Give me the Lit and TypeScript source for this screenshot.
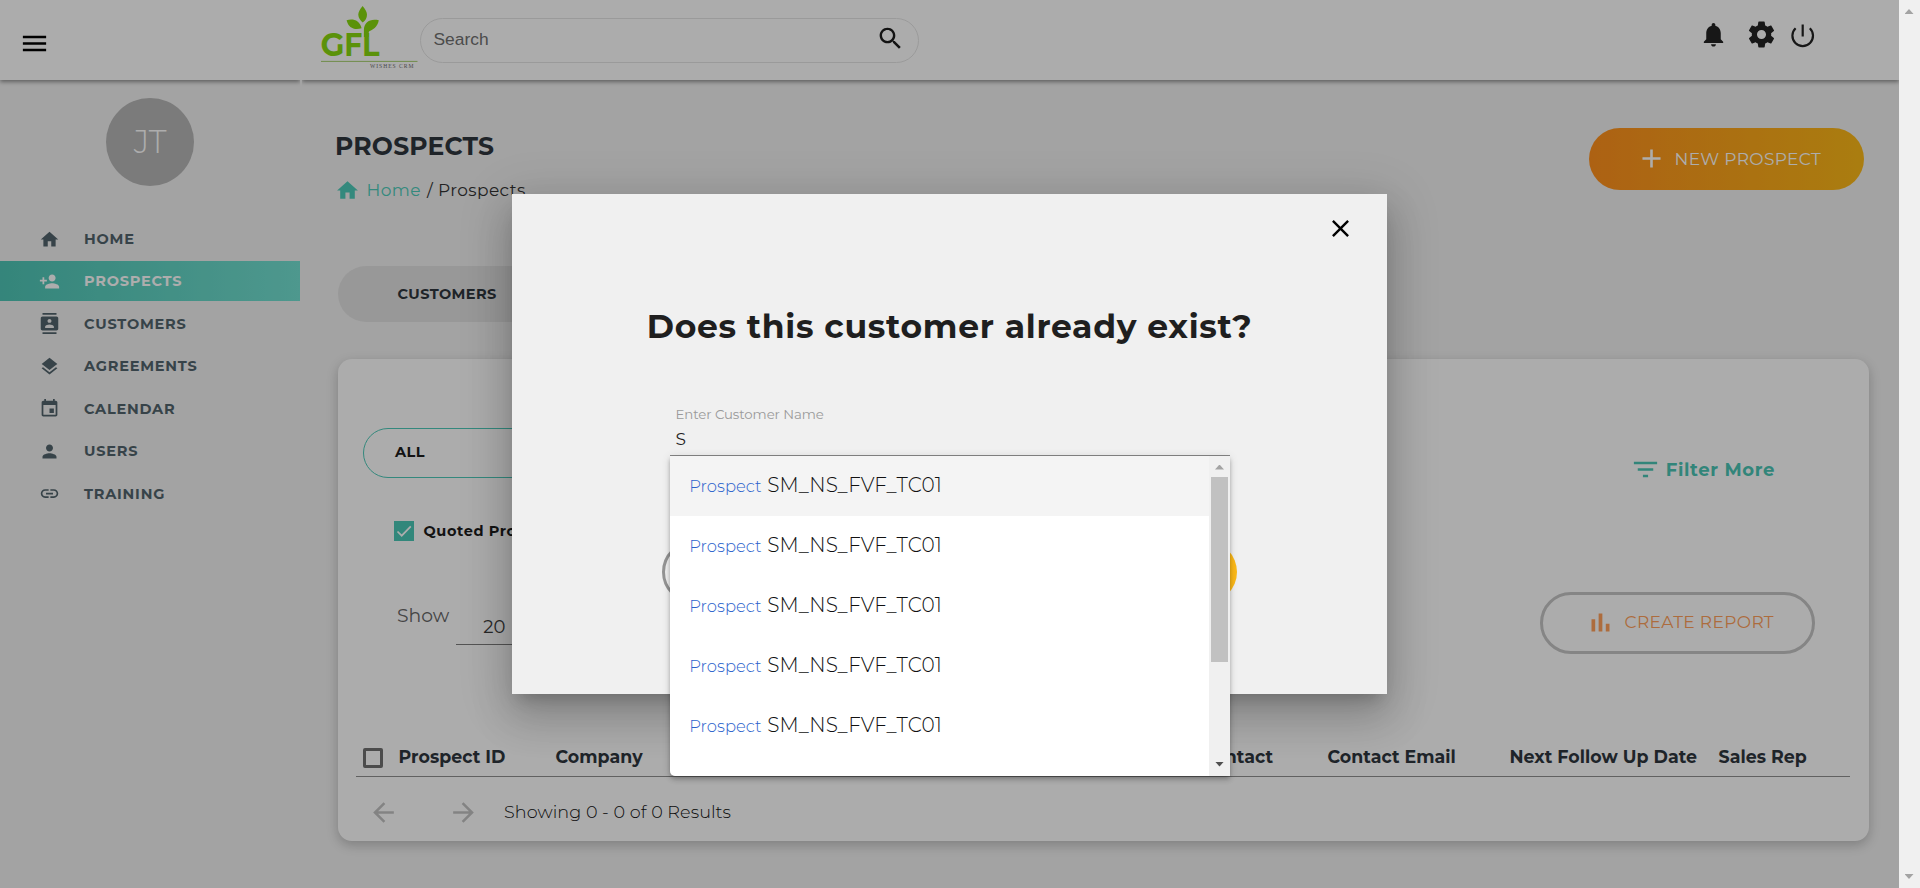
import { LitElement, html, css, svg } from 'lit';
import { customElement, property } from 'lit/decorators.js';
import { classMap } from 'lit/directives/class-map.js';

const ICONS: Record<string, string> = {
  menu: 'M3 18h18v-2H3v2zm0-5h18v-2H3v2zm0-7v2h18V6H3z',
  search:
    'M15.5 14h-.79l-.28-.27C15.41 12.59 16 11.11 16 9.5 16 5.91 13.09 3 9.5 3S3 5.91 3 9.5 5.91 16 9.5 16c1.61 0 3.09-.59 4.23-1.57l.27.28v.79l5 4.99L20.49 19l-4.99-5zm-6 0C7.01 14 5 11.99 5 9.5S7.01 5 9.5 5 14 7.01 14 9.5 11.99 14 9.5 14z',
  bell: 'M12 22c1.1 0 2-.9 2-2h-4c0 1.1.89 2 2 2zm6-6v-5c0-3.07-1.64-5.64-4.5-6.32V4c0-.83-.67-1.5-1.5-1.5s-1.5.67-1.5 1.5v.68C7.63 5.36 6 7.92 6 11v5l-2 2v1h16v-1l-2-2z',
  gear: 'M19.43 12.98c.04-.32.07-.64.07-.98s-.03-.66-.07-.98l2.11-1.65c.19-.15.24-.42.12-.64l-2-3.46c-.12-.22-.39-.3-.61-.22l-2.49 1c-.52-.4-1.08-.73-1.69-.98l-.38-2.65C14.46 2.18 14.25 2 14 2h-4c-.25 0-.46.18-.49.42l-.38 2.65c-.61.25-1.17.59-1.69.98l-2.49-1c-.23-.09-.49 0-.61.22l-2 3.46c-.13.22-.07.49.12.64l2.11 1.65c-.04.32-.07.65-.07.98s.03.66.07.98l-2.11 1.65c-.19.15-.24.42-.12.64l2 3.46c.12.22.39.3.61.22l2.49-1c.52.4 1.08.73 1.69.98l.38 2.65c.03.24.24.42.49.42h4c.25 0 .46-.18.49-.42l.38-2.65c.61-.25 1.17-.59 1.69-.98l2.49 1c.23.09.49 0 .61-.22l2-3.46c.12-.22.07-.49-.12-.64l-2.11-1.65zM12 15.5c-1.93 0-3.5-1.57-3.5-3.5s1.57-3.5 3.5-3.5 3.5 1.57 3.5 3.5-1.57 3.5-3.5 3.5z',
  home: 'M10 20v-6h4v6h5v-8h3L12 3 2 12h3v8z',
  personAdd:
    'M15 12c2.21 0 4-1.79 4-4s-1.79-4-4-4-4 1.79-4 4 1.79 4 4 4zm-9-2V7H4v3H1v2h3v3h2v-3h3v-2H6zm9 4c-2.67 0-8 1.34-8 4v2h16v-2c0-2.66-5.33-4-8-4z',
  contacts:
    'M20 0H4v2h16V0zM4 24h16v-2H4v2zM20 4H4c-1.1 0-2 .9-2 2v12c0 1.1.9 2 2 2h16c1.1 0 2-.9 2-2V6c0-1.1-.9-2-2-2zm-8 2.75c1.24 0 2.25 1.01 2.25 2.25s-1.01 2.25-2.25 2.25S9.75 10.24 9.75 9 10.76 6.75 12 6.75zM17 17H7v-1.5c0-1.67 3.33-2.5 5-2.5s5 .83 5 2.5V17z',
  layers:
    'M11.99 18.54l-7.37-5.73L3 14.07l9 7 9-7-1.63-1.27-7.38 5.74zM12 16l7.36-5.73L21 9l-9-7-9 7 1.63 1.27L12 16z',
  event:
    'M17 12h-5v5h5v-5zM16 1v2H8V1H6v2H5c-1.11 0-1.99.9-1.99 2L3 19c0 1.1.89 2 2 2h14c1.1 0 2-.9 2-2V5c0-1.1-.9-2-2-2h-1V1h-2zm3 18H5V8h14v11z',
  person:
    'M12 12c2.21 0 4-1.79 4-4s-1.79-4-4-4-4 1.79-4 4 1.79 4 4 4zm0 2c-2.67 0-8 1.34-8 4v2h16v-2c0-2.66-5.33-4-8-4z',
  link: 'M3.9 12c0-1.71 1.39-3.1 3.1-3.1h4V7H7c-2.76 0-5 2.24-5 5s2.24 5 5 5h4v-1.9H7c-1.71 0-3.1-1.39-3.1-3.1zM8 13h8v-2H8v2zm9-6h-4v1.9h4c1.71 0 3.1 1.39 3.1 3.1s-1.39 3.1-3.1 3.1h-4V17h4c2.76 0 5-2.24 5-5s-2.24-5-5-5z',
  plus: 'M19 13h-6v6h-2v-6H5v-2h6V5h2v6h6v2z',
  filter: 'M10 18h4v-2h-4v2zM3 6v2h18V6H3zm3 7h12v-2H6v2z',
  bars: 'M4 9h3.3v11H4zM16.700 13h3.300v7h-3.300zM10.350 4h3.300v16h-3.300z',
  back: 'M20 11H7.83l5.59-5.59L12 4l-8 8 8 8 1.41-1.41L7.83 13H20v-2z',
  forward: 'M12 4l-1.41 1.41L16.17 11H4v2h12.17l-5.58 5.59L12 20l8-8z',
  close:
    'M19 6.41L17.59 5 12 10.59 6.41 5 5 6.41 10.59 12 5 17.59 6.41 19 12 13.41 17.59 19 19 17.59 13.41 12z',
};

@customElement('ui-icon')
export class UiIcon extends LitElement {
  @property() name = '';
  static styles = css`
    :host { display: block; flex: none; width: 24px; height: 24px; }
    svg { display: block; width: 100%; height: 100%; fill: currentColor; }
  `;
  render() {
    return html`<svg viewBox="0 0 24 24"><path d=${ICONS[this.name] ?? ''}></path></svg>`;
  }
}

@customElement('brand-logo')
export class BrandLogo extends LitElement {
  static styles = css`
    :host { display: block; flex: none; width: 100px; height: 72px; }
    svg { display: block; }
    .mark { font: 700 33px Montserrat, Inter, sans-serif; fill: #86d80f; }
    .leaf { fill: #86d80f; }
    .tag { font: 5.6px "Liberation Serif", serif; fill: #707070; }
  `;
  render() {
    return html`<svg width="100" height="72" viewBox="0 0 100 72">
      ${svg`
        <text class="mark" x="0.500" y="56.2" textLength="24" lengthAdjust="spacingAndGlyphs">G</text>
        <text class="mark" x="24.300" y="56.2" textLength="18" lengthAdjust="spacingAndGlyphs">F</text>
        <text class="mark" x="42" y="56.2" textLength="17.500" lengthAdjust="spacingAndGlyphs">L</text>
        <path class="leaf" d="M42.6 6C45.5 9.5 47 12 47 14.7 47 18 45.3 20.5 42.7 22.4 40 20 38.3 17.5 38.3 14.7 38.3 12 39.7 9.500 42.6 6Z"/>
        <path class="leaf" d="M26.600 20.200C33 18.400 39.500 20 41.600 28.200 34.500 30.500 28.500 28 26.600 20.200Z"/>
        <path class="leaf" d="M58.800 20.200C57.500 27.500 52.500 29.500 49 31.500 48.600 32.500 48.700 34 48.700 37H43.900V30C44 22 50 18.300 58.800 20.200Z"/>
        <rect x="1" y="60.900" width="96.500" height="0.900" fill="#9bc95c"/>
        <text class="tag" x="50" y="67.800" textLength="43.500">WISHES CRM</text>`}
    </svg>`;
  }
}

@customElement('app-root')
export class AppRoot extends LitElement {
  private nav = [
    ['home', 'HOME'],
    ['personAdd', 'PROSPECTS'],
    ['contacts', 'CUSTOMERS'],
    ['layers', 'AGREEMENTS'],
    ['event', 'CALENDAR'],
    ['person', 'USERS'],
    ['link', 'TRAINING'],
  ];
  private active = 'PROSPECTS';
  private options = Array.from({ length: 5 }, () => 'SM_NS_FVF_TC01');

  static styles = css`
    :host {
      display: grid; grid-template-columns: 1fr 21px; width: 100%; height: 888px;
      overflow: hidden; position: relative; background: #f0f0f0; color: #2f353d;
      font-family: Montserrat, Inter, sans-serif;
    }
    * { box-sizing: border-box; }
    .page {
      display: grid; grid-template-columns: 300px 1fr; column-gap: 2px; grid-template-rows: 80px 1fr; min-width: 0;
      background: linear-gradient(#fefefe 80px, transparent 80px);
    }
    .bar { background: #fefefe; display: flex; align-items: center; box-shadow: 0 2px 4px rgba(0,0,0,.4); clip-path: inset(0 0 -8px 0); }
    .bar.left { padding: 6px 0 0 18.500px; color: #000; }
    .bar.left ui-icon { width: 31px; height: 31px; }
    .bar.right { align-items: flex-start; padding: 0 80px 0 18px; color: #222; }
    .search {
      display: flex; align-items: center; justify-content: space-between; width: 499px; height: 45px;
      margin-top: 18px; padding: 0 13.500px 4px 12.500px; border: 1px solid #e4e4e4; border-radius: 23px;
      font: 17.4px "Liberation Sans", Arial, sans-serif; color: #707070;
    }
    .search span { padding-top: 1px; }
    .search ui-icon { width: 29px; height: 29px; color: #1c1c1c; }
    .tools { display: flex; align-items: center; margin: 19px 0 0 auto; height: 31px; }
    .tools .bell { width: 29px; height: 29px; margin-right: 18px; }
    .tools .gear { width: 31px; height: 31px; margin-right: 13px; }
    .tools svg { display: block; margin-right: 3px; }

    aside { padding-top: 18px; }
    .avatar {
      width: 88px; height: 88px; margin: 0 auto 33px; border-radius: 50%; background: #b5b5b5; color: #fff;
      display: flex; align-items: center; justify-content: center; font-size: 31.5px; font-weight: 300;
    }
    nav { display: flex; flex-direction: column; gap: 2.450px; }
    .item {
      display: flex; align-items: center; height: 40px; padding-left: 39px; gap: 24px;
      font-size: 14.5px; font-weight: 700; letter-spacing: .78px; color: #52646c;
    }
    .item ui-icon { width: 21px; height: 21px; }
    .item.active { background: linear-gradient(90deg, #4ec5b5, #73e0d1); color: #fff; }

    main { padding: 48px 30px 0 36px; min-width: 0; }
    .top { display: flex; justify-content: space-between; height: 74px; padding-right: 5px; }
    h1 { margin: 3px 0 17px -3px; font-size: 25px; line-height: 30px; font-weight: 700; letter-spacing: .2px; }
    .crumbs { display: flex; align-items: center; height: 24px; margin-left: -3px; font-size: 17px; letter-spacing: .4px; color: #333; }
    .crumbs ui-icon { width: 25px; height: 25px; margin-right: 6.500px; }
    .crumbs a, .crumbs ui-icon { color: #4dcbb9; }
    .crumbs .sep { margin: 0 5px 0 6px; }
    .pill { display: flex; align-items: center; width: 275px; height: 62px; border-radius: 31px; font-size: 17px; letter-spacing: .35px; white-space: nowrap; }
    .new { padding-left: 47px; background: linear-gradient(90deg, #ff901d, #fbb918); color: #fff; padding-bottom: 1px; }
    .new ui-icon { width: 31px; height: 31px; margin-right: 7.500px; }
    .tabs { display: flex; align-items: center; height: 56px; margin-top: 64px; width: 520px; padding-left: 59.500px; border-radius: 28px; background: #e1e1e1; font-size: 14.500px; font-weight: 700; letter-spacing: .4px; }
    .card { height: 482px; margin-top: 37px; padding-top: 69px; border-radius: 14px; background: #fefefe; box-shadow: 0 4px 12px rgba(0,0,0,.22); }
    .filters { display: flex; justify-content: space-between; padding: 0 94px 0 25px; height: 50px; }
    .select { display: flex; align-items: center; width: 330px; height: 50px; padding-left: 31px; padding-bottom: 2px; border: 1.500px solid #4dc9b8; border-radius: 25px; font-size: 14.500px; font-weight: 700; letter-spacing: .5px; color: #1c1c1c; }
    .more { display: flex; align-items: center; height: 31px; margin-top: 26px; color: #4bc5b4; font-size: 18px; font-weight: 700; letter-spacing: .65px; }
    .more ui-icon { width: 31px; height: 31px; margin-right: 5px; }
    .quoted { display: flex; align-items: center; gap: 9.500px; height: 20px; margin: 43px 0 0 56px; font-size: 14.500px; font-weight: 700; letter-spacing: .6px; color: #1c1c1c; }
    .tick { display: block; width: 20px; height: 20px; background: #4bc7b6; }
    .sizes { display: flex; justify-content: space-between; margin-top: 51px; padding: 0 54px 0 59px; height: 62px; }
    .show { display: flex; align-items: flex-start; font-size: 18.800px; line-height: 24px; color: #3c3c3c; }
    .show .lab { margin: 12px 7px 0 0; color: #666; }
    .count { width: 90px; height: 53px; padding: 23px 0 0 27px; border-bottom: 1px solid #7c7c7c; font-size: 18px; }
    .report { border: 3px solid #c4c4c4; color: #ff9f5a; padding: 0 0 2px 44px; }
    .report ui-icon { width: 27px; height: 27px; margin-right: 10.500px; }
    .thead { display: grid; grid-template-columns: 35.500px 157px 645.500px 126.500px 182px 209px 1fr; align-items: center; margin: 83px 19px 0 18px; padding-left: 7px; height: 40px; border-bottom: 1px solid #909090; font-size: 17.400px; font-weight: 700; letter-spacing: .05px; white-space: nowrap; }
    .box { width: 20px; height: 20px; margin-top: 3px; border: 3px solid #707070; border-radius: 2px; }
    .pager { display: flex; align-items: center; padding: 6px 0 0 30px; height: 64px; font-size: 17.600px; font-weight: 300; letter-spacing: .07px; color: #111; }
    .pager span { padding-bottom: 1.500px; }
    .pager ui-icon { width: 31px; height: 31px; margin-right: 49px; color: #c2c2c2; }
    .pager .fwd { margin-right: 25px; }

    .track { display: flex; flex-direction: column; justify-content: space-between; align-items: center; background: #f0f0f0; }
    .track.outer { padding: 9px 1px 9px 0; }
    .up, .down { width: 9px; height: 5px; background: #a3a3a3; clip-path: polygon(50% 0, 100% 100%, 0 100%); }
    .down { clip-path: polygon(0 0, 100% 0, 50% 100%); }

    .backdrop { position: absolute; inset: 0 21px 0 0; display: grid; place-items: center; overflow: hidden; background: rgba(0,0,0,.32); }
    .dialog {
      width: 875px; height: 500px; background: #f0f0f0; color: #1f1f1f; display: flex; flex-direction: column; align-items: center;
      box-shadow: 0 11px 15px -7px rgba(0,0,0,.2), 0 24px 38px 3px rgba(0,0,0,.14), 0 9px 46px 8px rgba(0,0,0,.12);
    }
    .x { align-self: flex-end; width: 29px; height: 29px; margin: 20px 32px 0 0; color: #000; }
    h2 { margin: 63px 0 0; font-size: 33px; line-height: 40px; font-weight: 700; letter-spacing: .7px; white-space: nowrap; }
    .field { position: relative; width: 560px; height: 56px; margin-top: 53.500px; border-bottom: 1px solid #868686; padding-left: 6px; }
    .label { display: block; padding-top: 4px; line-height: 20px; font-size: 13.300px; letter-spacing: -.08px; color: #9a9a9a; }
    .value { display: block; margin-top: 4px; line-height: 22px; font-size: 17px; }
    .panel { position: absolute; top: 56px; left: 0; width: 560px; height: 320px; display: grid; grid-template-columns: 1fr 21px; background: #fff; border-radius: 0 0 0 5px; overflow: hidden; }
    .shade { position: absolute; top: 56px; left: 0; width: 560px; height: 320px; border-radius: 0 0 0 5px; box-shadow: 0 2px 4px -1px rgba(0,0,0,.2), 0 4px 5px rgba(0,0,0,.14), 0 1px 10px rgba(0,0,0,.12); }
    .opt { display: flex; align-items: baseline; height: 60px; line-height: 58px; padding-left: 19.700px; gap: 5.600px; font-size: 20px; font-weight: 300; letter-spacing: .05px; white-space: nowrap; color: #111; }
    .opt.hot { background: #f4f4f4; }
    .opt .kind { font-size: 16.400px; color: #2a62cc; }
    .track.inner { padding: 9px 0 9px 1px; justify-content: flex-start; }
    .thumb { width: 17px; height: 185px; margin: 7px 0 auto; background: #c1c1c1; }
    .inner .down { background: #505050; }
    .actions { display: flex; justify-content: space-between; width: 575px; margin-top: 85px; }
    .ghost { width: 275px; height: 62px; border: 3px solid #949494; border-radius: 31px; }
    .go { width: 275px; height: 62px; border-radius: 31px; background: linear-gradient(90deg, #ff901d, #fbb918); }
  `;

  render() {
    return html`
      <div class="page">
        <div class="bar left"><ui-icon name="menu"></ui-icon></div>
        <div class="bar right">
          <brand-logo></brand-logo>
          <div class="search"><span>Search</span><ui-icon name="search"></ui-icon></div>
          <div class="tools">
            <ui-icon class="bell" name="bell"></ui-icon>
            <ui-icon class="gear" name="gear"></ui-icon>
            <svg width="26" height="26" viewBox="0 0 26 26" fill="none" stroke="#222" stroke-width="2.2">
              <path d="M5.600 6.300A10.300 10.300 0 1 0 19.800 6.300M12.700 2.500V14.500"></path>
            </svg>
          </div>
        </div>
        <aside>
          <div class="avatar">JT</div>
          <nav>
            ${this.nav.map(
              ([icon, text]) => html`<div class=${classMap({ item: true, active: text === this.active })}>
                <ui-icon name=${icon}></ui-icon><span>${text}</span>
              </div>`
            )}
          </nav>
        </aside>
        <main>
          <div class="top">
            <div>
              <h1>PROSPECTS</h1>
              <div class="crumbs"><ui-icon name="home"></ui-icon><a>Home</a><span class="sep">/</span><span>Prospects</span></div>
            </div>
            <div class="pill new"><ui-icon name="plus"></ui-icon>NEW PROSPECT</div>
          </div>
          <div class="tabs">CUSTOMERS</div>
          <section class="card">
            <div class="filters">
              <div class="select">ALL</div>
              <div class="more"><ui-icon name="filter"></ui-icon>Filter More</div>
            </div>
            <div class="quoted">
              <svg class="tick" viewBox="0 0 20 20"><path d="M3.500 10.500l4.200 4.200L16.800 5.300" fill="none" stroke="#fff" stroke-width="1.700"></path></svg>
              <span>Quoted Pros</span>
            </div>
            <div class="sizes">
              <div class="show"><span class="lab">Show</span><span class="count">20</span></div>
              <div class="pill report"><ui-icon name="bars"></ui-icon>CREATE REPORT</div>
            </div>
            <div class="thead">
              <span class="box"></span><span>Prospect ID</span><span>Company</span><span>Contact</span>
              <span>Contact Email</span><span>Next Follow Up Date</span><span>Sales Rep</span>
            </div>
            <div class="pager">
              <ui-icon name="back"></ui-icon><ui-icon class="fwd" name="forward"></ui-icon>
              <span>Showing 0 - 0 of 0 Results</span>
            </div>
          </section>
        </main>
      </div>
      <div class="track outer"><i class="up"></i><i class="down"></i></div>
      <div class="backdrop">
        <div class="dialog">
          <ui-icon class="x" name="close"></ui-icon>
          <h2>Does this customer already exist?</h2>
          <div class="field">
            <span class="label">Enter Customer Name</span>
            <span class="value">S</span>
            <div class="shade"></div>
            <div class="panel">
              <div>
                ${this.options.map(
                  (name, i) => html`<div class=${classMap({ opt: true, hot: i === 0 })}>
                    <span class="kind">Prospect</span><span>${name}</span>
                  </div>`
                )}
              </div>
              <div class="track inner"><i class="up"></i><i class="thumb"></i><i class="down"></i></div>
            </div>
          </div>
          <div class="actions"><div class="ghost"></div><div class="go"></div></div>
        </div>
      </div>
    `;
  }
}
